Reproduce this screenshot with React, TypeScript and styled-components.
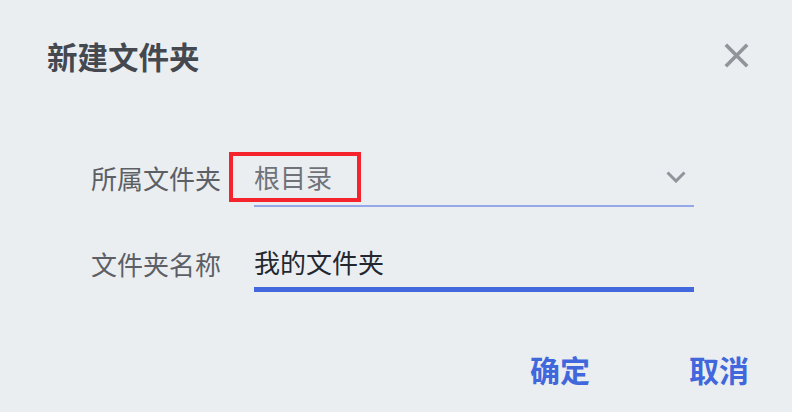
import React from "react";
import styled, { createGlobalStyle } from "styled-components";

const GlobalStyle = createGlobalStyle`
  html, body {
    margin: 0;
    padding: 0;
    background: #ebeef0;
  }
  body {
    font-family: "Noto Sans CJK SC", "Noto Sans", sans-serif;
  }
`;

const CloseIcon = () => (
  <svg width="25" height="25" viewBox="0 0 25 25" fill="none">
    <path d="M1.8 1.8L23.2 23.2M23.2 1.8L1.8 23.2" stroke="#8f959b" strokeWidth="3.6" />
  </svg>
);

const ChevronIcon = () => (
  <svg width="20" height="12" viewBox="0 0 20 12" fill="none">
    <path d="M1.5 1.5L10 10L18.5 1.5" stroke="#8f959b" strokeWidth="3" />
  </svg>
);

const App = () => {
  return (
    <>
      <GlobalStyle />
      <Dialog>
        <Header>
          <Title>新建文件夹</Title>
          <CloseButton aria-label="关闭">
            <CloseIcon />
          </CloseButton>
        </Header>
        <Form>
          <Row>
            <Label>所属文件夹</Label>
            <Select>
              <Value>根目录</Value>
              <ChevronIcon />
            </Select>
          </Row>
          <Row $spaced>
            <Label>文件夹名称</Label>
            <Input defaultValue="我的文件夹" />
          </Row>
        </Form>
        <Footer>
          <ActionButton>确定</ActionButton>
          <ActionButton>取消</ActionButton>
        </Footer>
      </Dialog>
    </>
  );
};

export default App;

const Dialog = styled.div`
  width: 792px;
  height: 412px;
  box-sizing: border-box;
  padding: 0 43px 0 47px;
  display: flex;
  flex-direction: column;
  background: #ebeef0;
`;

const Header = styled.div`
  height: 111px;
  display: flex;
  align-items: center;
  justify-content: space-between;
`;

const Title = styled.h1`
  margin: 0;
  font-size: 30.5px;
  line-height: 30px;
  font-weight: 700;
  color: #45494f;
`;

const CloseButton = styled.button`
  width: 25px;
  height: 25px;
  padding: 0;
  border: 0;
  background: none;
  display: flex;
  cursor: pointer;
`;

const Form = styled.div`
  margin-top: 38px;
  padding-left: 44px;
  display: flex;
  flex-direction: column;
`;

const Row = styled.div<{ $spaced?: boolean }>`
  display: grid;
  grid-template-columns: 163px 440px;
  align-items: center;
  margin-top: ${(p) => (p.$spaced ? "28px" : "0")};
`;

const Label = styled.label`
  font-size: 26px;
  line-height: 26px;
  color: #5c6066;
`;

const Select = styled.div`
  height: 56px;
  display: flex;
  align-items: center;
  justify-content: space-between;
  padding-right: 8px;
  border-bottom: 2px solid #94a7e8;
`;

const Value = styled.span`
  position: relative;
  font-size: 26px;
  line-height: 26px;
  color: #6f7379;

  &::after {
    content: "";
    position: absolute;
    top: -12px;
    bottom: -12px;
    left: -25px;
    right: -29px;
    border: 4px solid #f5232b;
  }
`;

const Input = styled.input`
  height: 52px;
  box-sizing: content-box;
  padding: 0;
  border: 0;
  border-bottom: 5px solid #4368de;
  background: transparent;
  outline: none;
  font-family: inherit;
  font-size: 26px;
  color: #232730;
`;

const Footer = styled.div`
  display: flex;
  justify-content: flex-end;
  gap: 99px;
  padding-top: 62px;
`;

const ActionButton = styled.button`
  padding: 0;
  border: 0;
  background: none;
  font-family: inherit;
  font-size: 30px;
  line-height: 30px;
  font-weight: 700;
  color: #4167dc;
  cursor: pointer;
`;
